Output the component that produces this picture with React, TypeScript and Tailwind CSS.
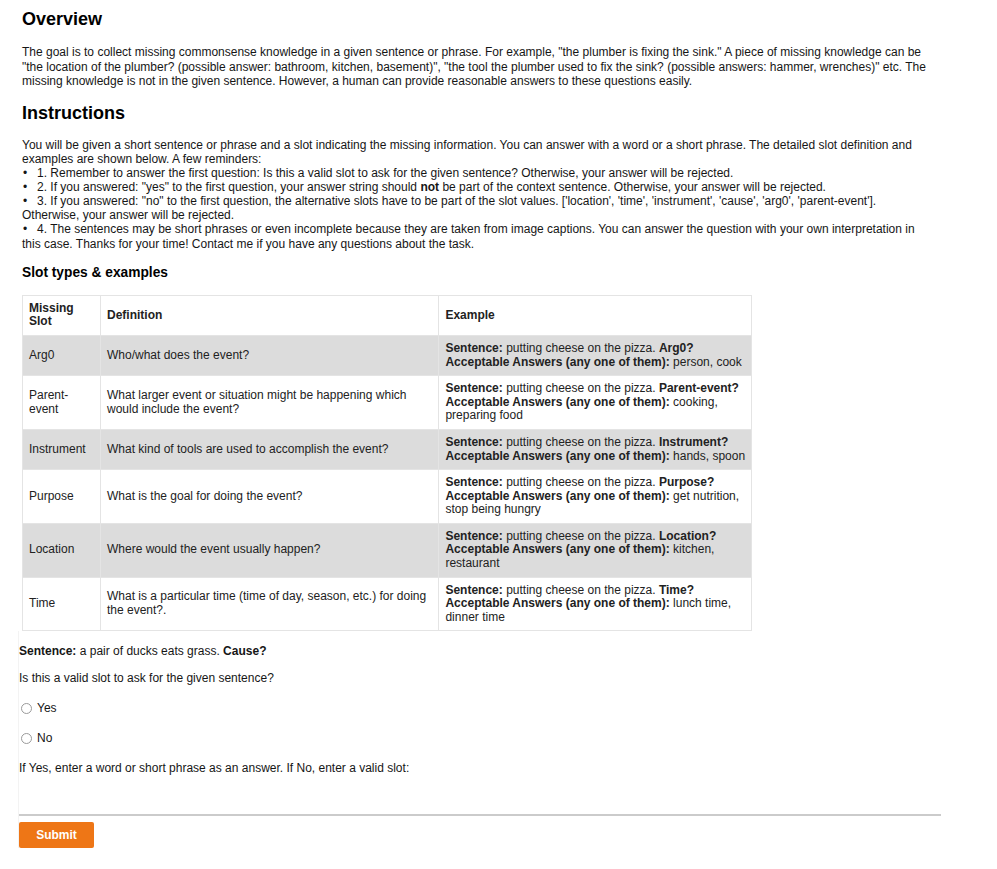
import React from "react";

const rows = [
  { slot: "Arg0", def: "Who/what does the event?", q: "Arg0?", ans: "person, cook", gray: true },
  { slot: "Parent-event", def: "What larger event or situation might be happening which would include the event?", q: "Parent-event?", ans: "cooking, preparing food", gray: false },
  { slot: "Instrument", def: "What kind of tools are used to accomplish the event?", q: "Instrument?", ans: "hands, spoon", gray: true },
  { slot: "Purpose", def: "What is the goal for doing the event?", q: "Purpose?", ans: "get nutrition, stop being hungry", gray: false },
  { slot: "Location", def: "Where would the event usually happen?", q: "Location?", ans: "kitchen, restaurant", gray: true },
  { slot: "Time", def: "What is a particular time (time of day, season, etc.) for doing the event?.", q: "Time?", ans: "lunch time, dinner time", gray: false },
];

function Radio({ label }: { label: string }) {
  return (
    <label className="flex items-center h-[14px]">
      <span className="ml-[2px] w-[11px] h-[11px] rounded-full border border-[#9a9a9a] bg-white inline-block" />
      <span className="ml-[5px]">{label}</span>
    </label>
  );
}

export default function App() {
  return (
    <div
      className="bg-white text-[#161616] min-h-[869px] w-[997px] pl-[18px]"
      style={{ fontFamily: '"Liberation Sans", Arial, Helvetica, sans-serif' }}
    >
      <div className="w-[913px] pl-[4px] pt-[8px] text-[12px] leading-[14.3px]">
        <h1 className="text-[18px] font-bold leading-[22px] text-black">Overview</h1>
        <p className="mt-[15px] leading-[14.5px]">
          The goal is to collect missing commonsense knowledge in a given sentence or phrase. For example, "the plumber is fixing the sink." A piece of missing knowledge can be "the location of the plumber? (possible answer: bathroom, kitchen, basement)", "the tool the plumber used to fix the sink? (possible answers: hammer, wrenches)" etc. The missing knowledge is not in the given sentence. However, a human can provide reasonable answers to these questions easily.
        </p>
        <h2 className="mt-[13px] text-[18px] font-bold leading-[22px] text-black">Instructions</h2>
        <div className="mt-[14px] leading-[14.15px]">
          <p>
            You will be given a short sentence or phrase and a slot indicating the missing information. You can answer with a word or a short phrase. The detailed slot definition and examples are shown below. A few reminders:
          </p>
          <ul>
            <li>
              <span className="inline-block w-[15px] pl-[1px]">•</span>1. Remember to answer the first question: Is this a valid slot to ask for the given sentence? Otherwise, your answer will be rejected.
            </li>
            <li>
              <span className="inline-block w-[15px] pl-[1px]">•</span>2. If you answered: "yes" to the first question, your answer string should <b>not</b> be part of the context sentence. Otherwise, your answer will be rejected.
            </li>
            <li>
              <span className="inline-block w-[15px] pl-[1px]">•</span>3. If you answered: "no" to the first question, the alternative slots have to be part of the slot values. ['location', 'time', 'instrument', 'cause', 'arg0', 'parent-event']. Otherwise, your answer will be rejected.
            </li>
            <li>
              <span className="inline-block w-[15px] pl-[1px]">•</span>4. The sentences may be short phrases or even incomplete because they are taken from image captions. You can answer the question with your own interpretation in this case. Thanks for your time! Contact me if you have any questions about the task.
            </li>
          </ul>
        </div>
        <h3 className="mt-[13px] text-[13.75px] font-bold leading-[17px] text-black">Slot types &amp; examples</h3>
        <table className="mt-[14px] w-[730px] border-collapse text-[12px] leading-[13.6px] text-[#222]">
          <colgroup>
            <col className="w-[78px]" />
            <col className="w-[339px]" />
            <col className="w-[313px]" />
          </colgroup>
          <thead>
            <tr>
              <th className="border border-[#e4e4e4] px-[6px] py-[6px] text-left align-middle font-bold">Missing Slot</th>
              <th className="border border-[#e4e4e4] px-[6px] py-[6px] text-left align-middle font-bold">Definition</th>
              <th className="border border-[#e4e4e4] pl-[6px] pr-[1px] py-[6px] text-left align-middle font-bold">Example</th>
            </tr>
          </thead>
          <tbody>
            {rows.map((r) => (
              <tr key={r.slot} className={r.gray ? "bg-[#dcdcdc]" : "bg-white"}>
                <td className="border border-[#e4e4e4] px-[6px] py-[6px] align-middle">{r.slot}</td>
                <td className="border border-[#e4e4e4] px-[6px] py-[6px] align-middle">{r.def}</td>
                <td className="border border-[#e4e4e4] pl-[6px] pr-[1px] py-[6px] align-middle">
                  <b>Sentence:</b> putting cheese on the pizza. <b>{r.q}</b>
                  <br />
                  <b>Acceptable Answers (any one of them):</b> {r.ans}
                </td>
              </tr>
            ))}
          </tbody>
        </table>
      </div>

      <div className="w-[922px] border-l border-[#f3f3f3] text-[12px] leading-[14px] pt-[13px]">
        <p>
          <b>Sentence:</b> a pair of ducks eats grass. <b>Cause?</b>
        </p>
        <p className="mt-[13px]">Is this a valid slot to ask for the given sentence?</p>
        <div className="mt-[16px]">
          <Radio label="Yes" />
        </div>
        <div className="mt-[16px]">
          <Radio label="No" />
        </div>
        <p className="mt-[16px]">If Yes, enter a word or short phrase as an answer. If No, enter a valid slot:</p>
        <input
          type="text"
          className="block mt-[1px] w-[922px] h-[40px] border-0 border-b-2 border-[#cbcbcb] outline-none bg-transparent"
        />
        <button className="mt-[6px] w-[75px] h-[26px] rounded-[2px] bg-[#ee7616] text-white font-bold text-[12px]">
          Submit
        </button>
      </div>
    </div>
  );
}
